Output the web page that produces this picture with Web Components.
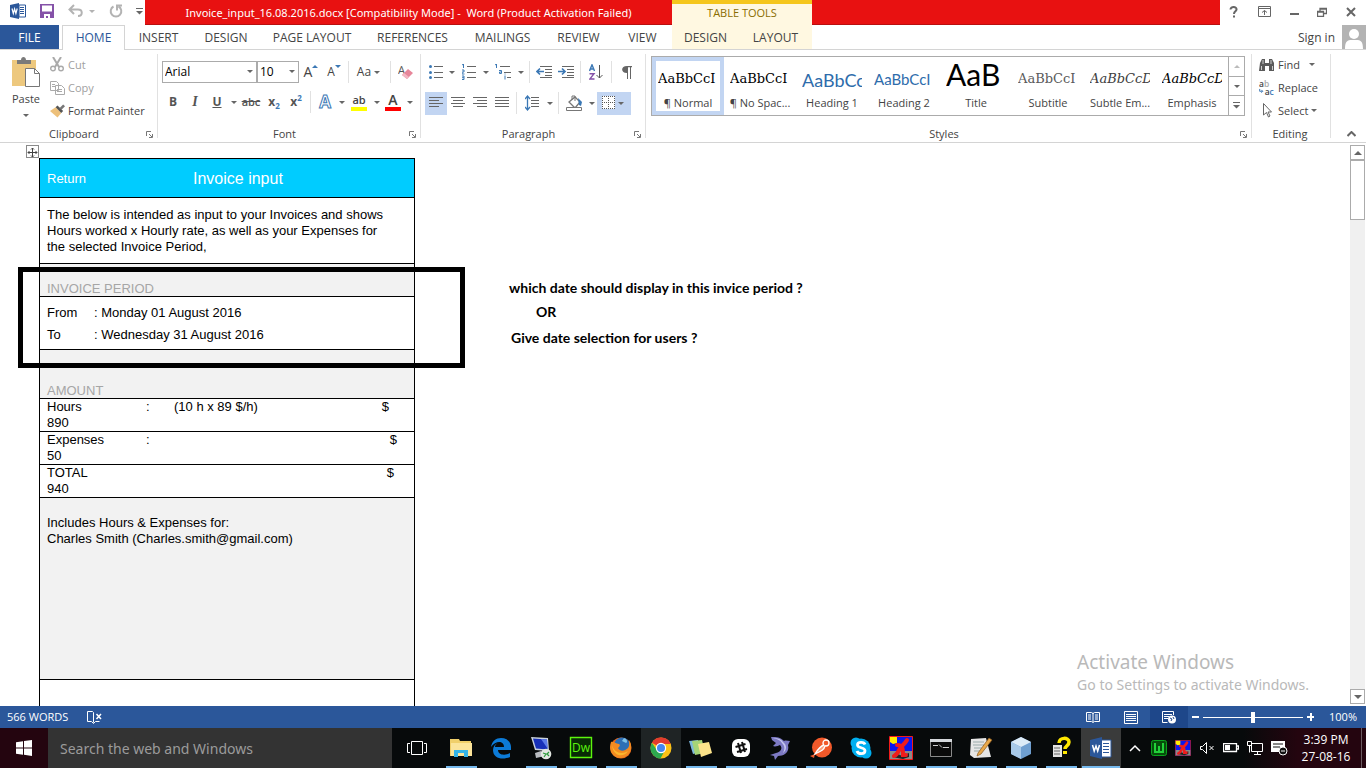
<!DOCTYPE html>
<html lang="en">
<head>
<meta charset="utf-8">
<title>Invoice_input_16.08.2016.docx - Word</title>
<style>
  html, body { margin: 0; height: 100%; }
  body { font: 11px/16px "Open Sans", "Noto Sans", sans-serif; color: #444; background: #fff; overflow: hidden; }
</style>
</head>
<body>
<word-desktop></word-desktop>

<script>
const G = '#666', B = '#3b78b5';
const lines = (x, ys, w, c = G) => ys.map((y, i) => `<path d="M${Array.isArray(x) ? x[i] : x} ${y}.5h${Array.isArray(w) ? w[i] : w}" stroke="${c}" fill="none"/>`).join('');

/* name: [width, height, markup] */
const ICONS = {
  word: [16, 16, `<path d="M9 2h6.500v12H9z" fill="#fff" stroke="#2b579a"/><path d="M10 4.500h4M10 6.500h4M10 8.500h4M10 10.500h4" stroke="#2b579a"/><path d="M0 2l9-2v16l-9-2z" fill="#2b579a"/><path d="M2 5.500l1.300 5L4.600 6l1.300 4.500L7.200 5.500" stroke="#fff" stroke-width="1.200" fill="none"/>`],
  save: [14, 14, `<path d="M0 0h14v14H0z" fill="#8552a8"/><path d="M2 1.500h10v6H2zM4 10h6v4H8v-2H6v2H4z" fill="#fff"/>`],
  undo: [16, 14, `<path d="M1.500 5.500h8.500c5 0 5 6.500 0 6.500M6 1L1.500 5.500 6 10" stroke="#b3b3b3" stroke-width="2" fill="none"/>`],
  redo: [14, 14, `<path d="M4.500 2.500A5.300 5.300 0 1 0 9.500 2.500M8 6.500V1.500h5" stroke="#b3b3b3" stroke-width="2" fill="none"/>`],
  more: [7, 7, `<path d="M0 .5h7" stroke="#666"/><path d="M0 3h7l-3.500 3.500z" fill="#666"/>`],
  help: [10, 12, `<path d="M1.500 3.500c0-3.500 6.500-3 6 0C7.200 5.500 5 5 5 8" stroke="#666" stroke-width="2" fill="none"/><path d="M4 9.500h2v2H4z" fill="#666"/>`],
  ribbonopt: [13, 11, `<path d="M.5.5h12v10H.5zM.5 2.500h12M6.500 9V4.500M4 6.500l2.500-2 2.500 2" stroke="#666" fill="none"/>`],
  min: [9, 10, `<path d="M0 6h9v2H0z" fill="#666"/>`],
  restore: [10, 10, `<path d="M.5 4.500h6v5h-6zM.5 5h6M3 4V1.500h6.500v5H7M3 2h6.500" stroke="#666" stroke-width="1.300" fill="none"/>`],
  close: [10, 10, `<path d="M1 1l8 8M9 1L1 9" stroke="#666" stroke-width="2"/>`],
  user: [24, 24, `<path d="M0 0h24v24H0z" fill="#b3b3b3"/><circle cx="12" cy="9" r="5" fill="#fff"/><path d="M3 24c0-10 4-9 9-9s9-1 9 9z" fill="#fff"/>`],
  paste: [30, 31, `<path d="M1 3h24v26H1z" fill="#edc87e"/><path d="M6 7V3h4c0-4 5-4 5 0h5v4z" fill="#7a7a7a"/><path d="M14.500 11.500h9l5 5v13h-14z" fill="#fff" stroke="#777"/><path d="M23.500 11.500v5h5" fill="none" stroke="#777"/>`],
  cut: [14, 15, `<path d="M3 0l6 10M11 0L5 10" stroke="#aaa" stroke-width="2"/><circle cx="3" cy="11.500" r="2.300" fill="none" stroke="#aaa" stroke-width="1.400"/><circle cx="11" cy="11.500" r="2.300" fill="none" stroke="#aaa" stroke-width="1.400"/>`],
  copy: [15, 14, `<path d="M.5.5h6l2 2v7h-8zM5.500 4.500h6l3 3v6h-9z" fill="#fff" stroke="#aaa"/><path d="M2 3.500h3M2 5.500h3M7 8.500h5M7 10.500h5" stroke="#aaa"/>`],
  painter: [16, 14, `<path d="M0 7l6-4 6 6-4 5z" fill="#edc07a"/><path d="M6 3l2-2 6 6-2 2z" fill="#555"/><path d="M10 4l4-4 2 2-4 4z" fill="#777"/>`],
  launch: [7, 7, `<path d="M.5 5V.5H5M3 3l3 3M6.500 3v3.500H3" stroke="#777" fill="none"/>`],
  eraser: [16, 15, `<text x="0" y="9" font-size="11" fill="#555" font-family="Open Sans">A</text><path d="M4 10l6-6 5 4-6 6z" fill="#e7869a"/><path d="M4 10l2-2 5 4-2 2z" fill="#f3b6c2"/>`],
  bullets: [14, 14, `<circle cx="1.500" cy="1.500" r="1.500" fill="${B}"/><circle cx="1.500" cy="7.500" r="1.500" fill="${B}"/><circle cx="1.500" cy="12.500" r="1.500" fill="${B}"/>` + lines(5, [1, 7, 12], 9)],
  numbers: [14, 16, `<path d="M0 1l1.500-1v4M0 6h2v2H0v2h2.500M0 12h2v3.500H0M0 13.700h2" stroke="${B}" fill="none"/>` + lines(5, [2, 8, 13], 9)],
  multi: [16, 16, `<path d="M0 1l1.500-1v4M4 6.500h2.500v3H4.500v-1.500h2M10 11.500v4M10 9.500v1" stroke="${B}" fill="none"/>` + lines([5, 9, 12], [2, 8, 13], [10, 7, 4])],
  outdent: [16, 12, lines([4, 9, 9, 9, 4], [0, 3, 6, 9, 11], [12, 7, 7, 7, 12]) + `<path d="M8 5.500H1.500M4 2.500l-3 3 3 3" stroke="${B}" stroke-width="1.700" fill="none"/>`],
  indent: [16, 12, lines([4, 9, 9, 9, 4], [0, 3, 6, 9, 11], [12, 7, 7, 7, 12]) + `<path d="M0 5.500h6.500M4 2.500l3 3-3 3" stroke="${B}" stroke-width="1.700" fill="none"/>`],
  sort: [14, 16, `<path d="M.5 7L3 .8 5.500 7M1.500 5h3" stroke="${B}" stroke-width="1.400" fill="none"/><path d="M.5 9.700h4.500L.8 15h4.700" stroke="#8552a8" stroke-width="1.400" fill="none"/><path d="M10.500 1v13M7.500 11l3 3 3-3" stroke="#555" fill="none"/>`],
  pilcrow: [10, 13, `<path d="M5 0h5v1.200H9V13H8V1.200H6V13H5V7C-1.500 7-1.500 0 5 0z" fill="#666"/>`],
  left: [14, 12, lines(0, [0, 3, 6, 9], [14, 10, 14, 10])],
  center: [14, 12, lines([0, 2, 0, 2], [0, 3, 6, 9], [14, 10, 14, 10])],
  right: [14, 12, lines([0, 4, 0, 4], [0, 3, 6, 9], [14, 10, 14, 10])],
  justify: [14, 12, lines(0, [0, 3, 6, 9], 14)],
  spacing: [14, 16, `<path d="M2.500 2v12M0 4l2.500-3L5 4M0 12l2.500 3L5 12" stroke="${B}" stroke-width="1.300" fill="none"/>` + lines(6, [2, 5, 8, 11], 8)],
  fill: [17, 16, `<path d="M3 7l6-5 5 5-5 6z" fill="#fff" stroke="#777" stroke-width="1.300"/><path d="M6 5V1h3v5" fill="none" stroke="#777"/><path d="M12 3l4 4-1 4-2-1z" fill="${B}"/><path d="M.5 12.500h15v3H.5z" fill="#fff" stroke="#777"/>`],
  borders: [14, 14, `<path d="M0 0h13v13H0z" fill="#fff"/><path d="M.5 0v13M12.500 0v13M6.500 0v13M0 .5h13M0 6.500h13M0 12.500h13" stroke="#555" stroke-dasharray="1 1" fill="none"/>`],
  find: [16, 14, `<path d="M1 5l2-4h3v4h4V1h3l2 4v8h-5V8H6v5H0z" fill="#5a5a5a"/><path d="M4 2v4M12 2v4M2.500 8v4M13.500 8v4" stroke="#fff" stroke-width=".7"/>`],
  replace: [17, 16, `<text x="0" y="7" font-size="9" font-weight="600" fill="#444" font-family="Open Sans">a<tspan fill="#aaa">b</tspan></text><text x="6" y="15" font-size="9" font-weight="600" fill="#444" font-family="Open Sans">a<tspan fill="${B}">c</tspan></text><path d="M.7 9v2.500h3M2.500 10l1.500 1.500L2.500 13" stroke="${B}" fill="none"/>`],
  select: [9, 15, `<path d="M.5.5v11.500l3-2.500 2 4.500 1.500-1-2-4h3.500z" fill="#fff" stroke="#666"/>`],
  collapse: [9, 6, `<path d="M.5 5l4-4 4 4" stroke="#666" stroke-width="2" fill="none"/>`],
  move: [11, 11, `<path d="M5.500 1v9M1 5.500h9M4 2.500L5.500 1 7 2.500M4 8.500L5.500 10 7 8.500M2.500 4L1 5.500 2.500 7M8.500 4L10 5.500 8.500 7" stroke="#444" fill="none"/>`],
  proof: [15, 13, `<path d="M6.500 1.500L5.500.5h-5v10h4l2 2 2-2h4" fill="none" stroke="#fff"/><path d="M6.500 1.500v10" stroke="#fff"/><path d="M9.500 3l4.500 5M14 3L9.500 8" stroke="#fff" stroke-width="1.500"/>`],
  read: [14, 12, `<path d="M.5 1.500h5l1.500 1 1.500-1h5v9h-5L7 11.500l-1.500-1h-5zM7 2v9M2 4h3M2 6h3M2 8h3M9 4h3M9 6h3M9 8h3" stroke="#fff" fill="none"/>`],
  print: [14, 13, `<path d="M.5.500h13v12H.5zM2 3.500h10M2 5.500h10M2 7.500h10M2 9.500h10" stroke="#fff" fill="none"/>`],
  web: [15, 13, `<path d="M11.500 4V.5H.5v11h5M2 3.500h8M2 5.500h5M2 7.500h4" stroke="#fff" fill="none"/><circle cx="10" cy="8.500" r="4" fill="#fff"/><path d="M8 7l2 1-1 2M11 6l1 2" stroke="#1e478a" fill="none"/>`],
  start: [16, 16, `<path d="M0 2.200L7 1.200V7.500H0zM8 1l8-1v7.500H8zM0 8.500h7v6.300l-7-1zM8 8.500h8V16l-8-1.200z" fill="#fff"/>`],
  taskview: [20, 14, `<path d="M4.500.5h11v13h-11zM3 2.500H.5v9H3M17 2.500h2.500v9H17" stroke="#fff" fill="none"/>`],
  explorer: [24, 24, `<path d="M1 3h9l1 2h11v15H1z" fill="#f0cf6a"/><path d="M2 7h21v13H2z" fill="#fbe49a"/><path d="M5 21v-7h14v7h-4v-4H9v4z" fill="#35b4e8"/>`],
  edge: [24, 24, `<path d="M2 11C3 5 7 2 12 2c6 0 10 4 10 9v3H9c0 5 7 6 12 3v4c-7 3-17 2-17-7 0-3 2-6 5-7-2 1-3 2-3 4h9c0-6-8-7-13 0z" fill="#0c7bd8"/>`],
  remote: [24, 24, `<path d="M2 1l17 1 1 13-14-1z" fill="#c9d2dc"/><path d="M4 2.500l14 1 .5 10L7 12.500z" fill="#1730b8"/><path d="M12 3l6 .5.500 9z" fill="#5a7ae8"/><path d="M6 17l6-2 4 5-9 2z" fill="#b9bdc2"/><circle cx="17" cy="18" r="5.300" fill="#e1e6e1"/><path d="M14 17l3 1-2 3M20 16l-2 2 2 2" stroke="#2b9a3a" stroke-width="1.200" fill="none"/>`],
  dreamweaver: [24, 24, `<path d="M1.500 1.500h21v20h-21z" fill="#082a05" stroke="#5cf40e" stroke-width="1.400"/><text x="3" y="16" font-size="12" fill="#5cf40e" font-family="Open Sans">Dw</text>`],
  firefox: [24, 24, `<circle cx="12" cy="12" r="10.500" fill="#e8681a"/><circle cx="13" cy="9.500" r="8" fill="#2d6fb5"/><path d="M15 2c3 1 4 4 2 5l-4-2z" fill="#7ec2e8"/><path d="M2 6c3-1 4 2 8 2 2 1 0 3-1 4 2 4 7 3 10 0 2-3 1-6 1-8 4 5 3 16-8 18C3 22-1 14 2 6z" fill="#f38a20"/><path d="M3 9c2 8 10 10 16 6-4 7-15 6-16-6z" fill="#fbb62d"/>`],
  chrome: [24, 24, `<circle cx="12" cy="12" r="10.500" fill="#fbc116"/><path d="M12 12L2.900 6.700A10.500 10.500 0 0 1 21.700 8H12z" fill="#e33b2e"/><path d="M2.900 6.700A10.500 10.500 0 0 0 11.500 22.500L16 14l-8 .3z" fill="#2da94f"/><circle cx="12" cy="12" r="5.200" fill="#fff"/><circle cx="12" cy="12" r="4" fill="#4587f0"/>`],
  notes: [26, 24, `<path d="M1 5l9-1 2 12-7 2z" fill="#7db8dd"/><path d="M4 5l10-1 3 13-10 2z" fill="#a5d477"/><path d="M10 8l11-2 3 11-11 4z" fill="#fbe38a"/>`],
  slack: [24, 24, `<rect x="3" y="3" width="18" height="18" rx="6" fill="#fff"/><path d="M9 7l3 10M13 6l3 10M6.500 11l10-3M8 16l10-3" stroke="#111" stroke-width="2"/>`],
  dolphin: [24, 24, `<path d="M2 1c6 0 9 0 13 4 2-1 4 0 6 0l-2 4c2 8-5 11-10 11l-3 4-1-4-4-1 6-2c5-1 7-5 4-8-2 1-5 2-7 1l3-3-4-3z" fill="#7d7ac4"/><path d="M4 2c5 0 8 1 10 4 4 3 4 8 0 11 2-4 2-7-1-10-2-3-5-4-9-5z" fill="#c5c7ee"/>`],
  postman: [24, 24, `<circle cx="13" cy="11.500" r="10" fill="#f1592a"/><path d="M1 20l5-2-1 4z" fill="#f1592a"/><circle cx="17" cy="7" r="3" fill="none" stroke="#fff" stroke-width="1.300"/><path d="M15 9c-4 1-6 4-9 9 6-3 9-4 10-8" stroke="#fff" stroke-width="1.300" fill="#f7a07f"/>`],
  skype: [24, 24, `<circle cx="12" cy="12" r="9.500" fill="#00aff0"/><circle cx="7" cy="7" r="5.500" fill="#00aff0"/><circle cx="17" cy="17" r="5.500" fill="#00aff0"/><path d="M16 8.500C15 5.500 8.500 5.500 8.500 9s7.500 2 7.500 5.800S9 18.500 8 15" stroke="#fff" stroke-width="2.800" fill="none"/>`],
  xming: [24, 24, `<path d="M.5.5h23v23H.5z" fill="#0a17ee" stroke="#f01b1b"/><path d="M1 15h22v8H1z" fill="#8a8a8a"/><path d="M3 21l6-3 4 2 7-3v4l-6 2z" fill="#222"/><path d="M1 1h7v6l-4 1-3-2z" fill="#ffee00"/><path d="M18 4c-2 4-6 6-8 10-1 3-3 5-5 6M8 9c6 0 6 4 6 10h3" stroke="#f01b1b" stroke-width="4" fill="none" stroke-linecap="round"/>`],
  cmd: [24, 24, `<path d="M1.500 3.500h21v17h-21z" fill="#0a0a0a" stroke="#8a8a8a"/><path d="M1 3h22v3H1z" fill="#d5d8dc"/><path d="M4 9.500h5M10 8.500l3 3M14 11.500h6" stroke="#ccc"/>`],
  notepad: [24, 24, `<path d="M2 3l15-1 5 19-17 1-4-3z" fill="#e6e6e6"/><path d="M4 6h11M4 9h11M5 12h8M5 15h7" stroke="#9aa"/><path d="M9 17L20 2l3 2-11 14-4 2z" fill="#e9a94b" stroke="#8b5a1e" stroke-width=".7"/>`],
  cube: [24, 24, `<path d="M12 1l10 5v12l-10 5-10-5V6z" fill="#6f9fd0"/><path d="M12 1l10 5-10 5L2 6z" fill="#dcebf7"/><path d="M2 6l10 5v12L2 18z" fill="#a8c9e8"/>`],
  hlp: [24, 24, `<path d="M4 9h9v12H4z" fill="#e4e4e4"/><path d="M5 12h6M5 15h6M5 18h6" stroke="#666"/><path d="M10 7c0-6 10-6 10-1 0 4-4 3.500-4 7" stroke="#ffe800" stroke-width="3.500" fill="none"/><path d="M14 15h4v3h-4z" fill="#ffe800"/>`],
  wordbig: [24, 24, `<path d="M12 4h10v17H12z" fill="#fff" stroke="#2b579a"/><path d="M14 7.500h6M14 10.500h6M14 13.500h6M14 16.500h6" stroke="#2b579a"/><path d="M1 4l12-3v22L1 20z" fill="#2b579a"/><path d="M3.500 9l1.700 6L7 10l1.700 5 1.800-6" stroke="#fff" stroke-width="1.500" fill="none"/>`],
  chevup: [12, 8, `<path d="M1 7l5-5 5 5" stroke="#fff" stroke-width="1.500" fill="none"/>`],
  wtray: [16, 16, `<rect x=".5" y=".5" width="15" height="15" rx="2" fill="#064d0b" stroke="#0aa51c"/><path d="M4 3v9h8V3M8 6v6" stroke="#22d13a" stroke-width="2" fill="none"/>`],
  mute: [15, 12, `<path d="M.5 4.500h2L6.500.500v11l-4-4h-2zM9.500 4l4 4M13.500 4l-4 4" stroke="#fff" fill="none"/>`],
  battery: [16, 10, `<path d="M.5.500h13v8H.5zM14 3h1.500v3H14" stroke="#fff" stroke-width="1.300" fill="none"/><path d="M2 2h5v5H2z" fill="#fff"/>`],
  network: [17, 15, `<path d="M4.500 2.500h11v8h-11zM7 13.500h7M10.500 11v2M.5.500h4v4h-4zM2.500 4.500v7" stroke="#fff" fill="none"/>`],
  action: [17, 16, `<path d="M0 1h14v11H0z" fill="#fff"/><path d="M2 4h10M2 7h7" stroke="#111"/><circle cx="12" cy="11" r="4" fill="#111" stroke="#fff"/><path d="M10 11h4" stroke="#fff"/>`],
};
ICONS.xtray = [16, 16, `<g transform="scale(.667)">${ICONS.xming[2]}</g>`];

class Part extends HTMLElement {
  connectedCallback() {
    if (this.shadowRoot) return;
    const t = document.createElement('template');
    t.innerHTML = `<style>
      *{box-sizing:border-box}
      button{font:inherit;color:inherit;background:none;border:0;padding:0;margin:0;display:flex;align-items:center;justify-content:center}
      a{color:inherit;text-decoration:none}
      ${this.css()}</style>${this.html()}`;
    this.attachShadow({ mode: 'open' }).append(t.content.cloneNode(true));
  }
  css() { return ''; }
  html() { return '<slot></slot>'; }
}
const define = (name, css, html) => customElements.define(name, class extends Part {
  css() { return css; }
  html() { return typeof html === 'function' ? html(this) : html; }
});

define('ui-icon', ':host{display:inline-flex;flex:none} svg{display:block}', el => {
  const [w, h, body] = ICONS[el.getAttribute('name')];
  return `<svg width="${w}" height="${h}" viewBox="0 0 ${w} ${h}" aria-hidden="true">${body}</svg>`;
});
const icon = n => `<ui-icon name="${n}"></ui-icon>`;

define('drop-arrow', ':host{display:inline-flex;flex:none;width:11px;justify-content:center} i{border:3px solid transparent;border-top-color:#666;border-bottom:0}', '<i></i>');

/* Square toolbar button; the w attribute is its width */
define('tool-button', `
  :host{display:flex;height:23px;flex:none}
  button{width:100%;height:100%}
  :host([on]) button{background:#c2d5f2}`,
  el => `<style>:host{width:${el.getAttribute('w') || 22}px}</style><button aria-label="${el.getAttribute('label')}"><slot></slot></button>`);
define('tool-sep', ':host{display:flex;justify-content:center;flex:none;width:7px;height:22px} i{width:1px;background:#e1e1e1}', '<i></i>');

define('combo-box', `
  :host{display:block;position:relative;height:22px;flex:none}
  select{appearance:none;width:100%;height:100%;border:1px solid #ababab;border-radius:0;background:#fff;font:12px/20px "Open Sans",sans-serif;color:#000;padding:0 2px;outline:0}
  drop-arrow{position:absolute;right:2px;top:9px;pointer-events:none}`,
  el => `<style>:host{width:${el.getAttribute('w')}px}</style><select aria-label="${el.getAttribute('label')}"><option>${el.getAttribute('value')}</option></select><drop-arrow></drop-arrow>`);

define('title-bar', `
  :host{display:flex;height:25px;flex:none}
  .qat{width:145px;display:flex;align-items:center;padding:0 2px 3px 10px;flex:none}
  .qat button{margin-right:14px;height:16px;flex:none}
  .qat button.s{margin-right:0}
  .qat button.g{margin-right:13px}
  .qat drop-arrow{margin:0 12px 0 2px;opacity:.5}
  .red{flex:1;display:flex;background:#e81111;border-bottom:1px solid #b90f0f;min-width:0}
  h1{margin:0;width:527px;text-align:center;color:#fff;font:11px/25px "Noto Sans",sans-serif;white-space:pre}
  .tt{width:140px;height:25px;border-top:4px solid #f5c61c;background:#fff8e1;color:#8a6d00;text-align:center;line-height:18px}
  .win{width:146px;display:flex;align-items:center;justify-content:space-between;padding:0 10px 2px 9px}`,
  `<div class="qat"><button aria-label="Word">${icon('word')}</button><button aria-label="Save">${icon('save')}</button><button class="s" aria-label="Undo">${icon('undo')}</button><drop-arrow></drop-arrow><button class="g" aria-label="Repeat">${icon('redo')}</button><button class="s" aria-label="Customize toolbar">${icon('more')}</button></div>
   <div class="red"><h1>Invoice_input_16.08.2016.docx [Compatibility Mode] -  Word (Product Activation Failed)</h1><div class="tt">TABLE TOOLS</div></div>
   <div class="win">${['help', 'ribbonopt', 'min', 'restore', 'close'].map(n => `<button aria-label="${n}">${icon(n)}</button>`).join('')}</div>`);

const tabs = [['HOME', 63, 'home'], ['INSERT', 67], ['DESIGN', 68], ['PAGE LAYOUT', 104], ['REFERENCES', 97], ['MAILINGS', 83], ['REVIEW', 69], ['VIEW', 59], ['DESIGN', 67, 't'], ['LAYOUT', 73, 't']];
define('tab-strip', `
  :host{display:flex;height:25px;flex:none;border-bottom:1px solid #d4d4d4;line-height:25px;font-size:12px}
  nav{display:flex;flex:1}
  a{text-align:center;height:24px;flex:none}
  .file{width:59px;background:#2b579a;color:#fff;margin-right:3px}
  .home{height:25px;border:1px solid #d4d4d4;border-bottom:0;background:#fff;color:#2b579a;line-height:24px}
  .t{background:#fff8e1}
  .sign{display:flex;gap:7px}`,
  `<nav><a class="file" href="#">FILE</a>${tabs.map(([n, w, c]) => `<a href="#" class="${c || ''}" style="width:${w}px">${n}</a>`).join('')}</nav>
   <a class="sign" href="#">Sign in ${icon('user')}</a>`);

/* A ribbon section: content on top, caption and launcher below */
define('ribbon-group', `
  :host{display:flex;flex-direction:column;flex:none;height:89px;background:linear-gradient(#e1e1e1,#e1e1e1) 100% 1px/1px 84px no-repeat}
  .body{flex:1;min-height:0}
  .cap{display:flex;align-items:center;height:16px;padding:0 5px 0 2px}
  .cap span{flex:1;text-align:center}
  button{height:7px}`,
  el => `<style>:host{width:${el.getAttribute('w')}px}</style><div class="body"><slot></slot></div>
   <div class="cap"><span>${el.getAttribute('caption')}</span>${el.hasAttribute('launcher') ? `<button aria-label="${el.getAttribute('caption')} settings">${icon('launch')}</button>` : ''}</div>`);

define('clipboard-tools', `
  :host{display:flex}
  .paste{width:46px;flex-direction:column;padding:4px 0 0 6px;justify-content:flex-start;gap:3px}
  .paste drop-arrow{margin-top:4px}
  ul{margin:0;padding:0 0 0 4px;list-style:none}
  li button{height:23px;gap:3px}
  li ui-icon{width:15px}
  .off{color:#a0a0a0}`,
  `<button class="paste">${icon('paste')}<span>Paste</span><drop-arrow></drop-arrow></button>
   <ul><li><button class="off">${icon('cut')}Cut</button></li><li><button class="off">${icon('copy')}Copy</button></li><li><button>${icon('painter')}Format Painter</button></li></ul>`);

define('font-tools', `
  :host{display:block;padding:8px 0 0 4px}
  .row{display:flex;align-items:center;height:22px}
  .row+.row{margin-top:8px}
  b,i,u,s{font:700 12px/20px "Open Sans",sans-serif;color:#555}
  i{font:italic 700 14px/20px "Liberation Serif",serif}
  s{font-size:11px;font-weight:600}
  sub,sup{font-size:8px;color:${B};line-height:0}
  .A{font-size:14px}
  .a{font-size:12px}
  .up,.dn{width:0;height:0;border:3px solid transparent;align-self:flex-start;margin-top:4px}
  .up{border-bottom-color:${B};border-top:0}
  .dn{border-top-color:${B};border-bottom:0}
  .out{color:#fff;font:700 17px/20px "Open Sans",sans-serif;-webkit-text-stroke:1px ${B}}
  .bar{display:flex;flex-direction:column;align-items:center;font:600 11px/12px "Open Sans",sans-serif;border-bottom:4px solid #ff0;width:16px;height:17px}
  .bar.r{border-color:#f00;font-size:14px}`,
  `<div class="row"><combo-box w="95" label="Font" value="Arial"></combo-box><combo-box w="42" label="Font size" value="10"></combo-box>
    <tool-button w="24" label="Grow font"><span class="A">A</span><span class="up"></span></tool-button><tool-button w="22" label="Shrink font"><span class="a">A</span><span class="dn"></span></tool-button><tool-sep></tool-sep>
    <tool-button w="35" label="Change case"><span class="a">Aa</span><drop-arrow></drop-arrow></tool-button><tool-sep></tool-sep><tool-button w="24" label="Clear formatting">${icon('eraser')}</tool-button></div>
   <div class="row"><tool-button label="Bold"><b>B</b></tool-button><tool-button label="Italic"><i>I</i></tool-button><tool-button label="Underline"><u>U</u></tool-button><drop-arrow></drop-arrow>
    <tool-button w="24" label="Strikethrough"><s>abc</s></tool-button><tool-button label="Subscript"><b>x<sub>2</sub></b></tool-button><tool-button label="Superscript"><b>x<sup>2</sup></b></tool-button><tool-sep></tool-sep>
    <tool-button label="Text effects"><span class="out">A</span></tool-button><drop-arrow></drop-arrow><tool-button w="24" label="Highlight"><span class="bar">ab</span></tool-button><drop-arrow></drop-arrow>
    <tool-button label="Font colour"><span class="bar r">A</span></tool-button><drop-arrow></drop-arrow></div>`);

const tb = (n, w, on) => `<tool-button label="${n}" w="${w}"${on ? ' on' : ''}>${icon(n)}</tool-button>`;
define('paragraph-tools', `
  :host{display:block;padding:8px 0 0 4px}
  .row{display:flex;align-items:center;height:22px}
  .row+.row{margin-top:9px}`,
  `<div class="row">${tb('bullets', 21)}<drop-arrow></drop-arrow>${tb('numbers', 23)}<drop-arrow></drop-arrow>${tb('multi', 24)}<drop-arrow></drop-arrow><tool-sep></tool-sep>${tb('outdent', 22)}${tb('indent', 22)}<tool-sep></tool-sep>${tb('sort', 24)}<tool-sep></tool-sep>${tb('pilcrow', 24)}</div>
   <div class="row">${tb('left', 22, 1)}${tb('center', 22)}${tb('right', 22)}${tb('justify', 22)}<tool-sep></tool-sep>${tb('spacing', 24)}<drop-arrow></drop-arrow><tool-sep></tool-sep>${tb('fill', 24)}<drop-arrow></drop-arrow><tool-button w="34" label="Borders" on>${icon('borders')}<drop-arrow></drop-arrow></tool-button></div>`);

const styles = [['¶ Normal', 'sel'], ['¶ No Spac...', ''], ['Heading 1', 'h1'], ['Heading 2', 'h2'], ['Title', 'ti', 'AaB'], ['Subtitle', 'su'], ['Subtle Em...', 'se', 'AaBbCcD'], ['Emphasis', 'em', 'AaBbCcD']];
define('style-gallery', `
  :host{display:flex;height:60px;margin:3px 7px 0 5px;border:1px solid #ababab}
  .it{flex-direction:column;width:72px;height:58px;justify-content:flex-start;padding-top:7px;border:0}
  .sel{border:4px solid #c2d5f2;padding-top:3px}
  .p{width:60px;height:31px;overflow:hidden;white-space:nowrap;font:13px/30px "DejaVu Serif",serif;color:#000;text-align:left}
  .l{line-height:16px;white-space:nowrap}
  .h1 .p{font:18px/32px Lato,sans-serif;color:#2e6cab}
  .h2 .p{font:15px/31px Lato,sans-serif;color:#2e6cab}
  .ti .p{font:30px/20px Lato,sans-serif}
  .su .p{color:#5a5a5a}
  .se .p{color:#404040;font-style:italic}
  .em .p{font-style:italic}
  .nav{display:flex;flex-direction:column;flex:1}
  .nav button{flex:1;border-left:1px solid #ababab;border-bottom:1px solid #ababab}
  .nav button:last-child{border-bottom:0}
  .u{border:3px solid transparent;border-bottom-color:#bbb;border-top:0}`,
  `${styles.map(([l, c, p]) => `<button class="it ${c}"><span class="p">${p || 'AaBbCcI'}</span><span class="l">${l}</span></button>`).join('')}
   <div class="nav"><button aria-label="Up"><i class="u"></i></button><button aria-label="Down"><drop-arrow></drop-arrow></button><button aria-label="More">${icon('more')}</button></div>`);

define('editing-tools', `
  :host{display:block;padding-left:7px}
  button{height:23px;gap:3px}
  ui-icon{width:16px;justify-content:center}
  .f drop-arrow{margin-left:4px}
  .s{gap:0} .s ui-icon{margin-right:3px}`,
  `<button class="f">${icon('find')}Find<drop-arrow></drop-arrow></button><button>${icon('replace')}Replace</button><button class="s">${icon('select')}Select<drop-arrow></drop-arrow></button>`);

define('ribbon-bar', `
  :host{display:flex;height:93px;flex:none;padding-top:3px;border-bottom:1px solid #d4d4d4}
  .grow{flex:1;display:flex;justify-content:flex-end;align-items:flex-end;padding:0 10px 5px 0}`,
  `<ribbon-group w="158" caption="Clipboard" launcher><clipboard-tools></clipboard-tools></ribbon-group>
   <ribbon-group w="263" caption="Font" launcher><font-tools></font-tools></ribbon-group>
   <ribbon-group w="225" caption="Paragraph" launcher><paragraph-tools></paragraph-tools></ribbon-group>
   <ribbon-group w="606" caption="Styles" launcher><style-gallery></style-gallery></ribbon-group>
   <ribbon-group w="79" caption="Editing"><editing-tools></editing-tools></ribbon-group>
   <div class="grow"><button aria-label="Collapse ribbon">${icon('collapse')}</button></div>`);

define('invoice-table', `
  :host{display:block;width:376px;flex:none;font:13px/16px "Liberation Sans",Arial,sans-serif;color:#000}
  table{width:100%;border:1px solid #000;border-spacing:0;table-layout:fixed}
  td,th{padding:0 7px;border-bottom:1px solid #000;vertical-align:middle;font-weight:400;text-align:left}
  .head th{height:39px;background:#0cf;color:#fff;padding-top:2px}
  .hd{display:flex;align-items:center}
  .hd a{width:146px}
  .hd span{font-size:16px}
  .intro td{height:66px}
  .sec th{background:#f2f2f2;color:#a6a6a6;vertical-align:bottom;line-height:14px}
  .s1 th{height:33px} .s2 th{height:49px}
  .dates td{height:53px;line-height:22px;padding-top:2px}
  .dates div{display:grid;grid-template-columns:47px auto}
  .line td{height:33px;vertical-align:bottom}
  .line td{line-height:16px}
  .line div{display:grid;grid-template-columns:99px 28px 1fr auto}
  .c1{padding-right:18px}.c2{padding-right:10px}.c3{padding-right:13px}
  .notes td{height:182px;background:#f2f2f2;vertical-align:top;padding-top:17px}
  .rest td{height:80px}`,
  `<table>
    <tr class="head"><th><div class="hd"><a href="#">Return</a><span>Invoice input</span></div></th></tr>
    <tr class="intro"><td>The below is intended as input to your Invoices and shows<br>Hours worked x Hourly rate, as well as your Expenses for<br>the selected Invoice Period,</td></tr>
    <tr class="sec s1"><th>INVOICE PERIOD</th></tr>
    <tr class="dates"><td><div><span>From</span><span>: Monday 01 August 2016</span><span>To</span><span>: Wednesday 31 August 2016</span></div></td></tr>
    <tr class="sec s2"><th>AMOUNT</th></tr>
    <tr class="line"><td><div><span>Hours</span><span>:</span><span>(10 h x 89 $/h)</span><span class="c1">$</span></div>890</td></tr>
    <tr class="line"><td><div><span>Expenses</span><span>:</span><span></span><span class="c2">$</span></div>50</td></tr>
    <tr class="line"><td><div><span>TOTAL</span><span></span><span></span><span class="c3">$</span></div>940</td></tr>
    <tr class="notes"><td>Includes Hours &amp; Expenses for:<br>Charles Smith (Charles.smith@gmail.com)</td></tr>
    <tr class="rest"><td></td></tr>
   </table>`);

define('scroll-bar', `
  :host{display:flex;flex-direction:column;width:15px;flex:none;margin:2px 1px 2px 0;background:#f0f0f0}
  button{height:15px;border:1px solid #ababab;background:#fff;flex:none}
  .thumb{height:60px;border:1px solid #ababab;background:#fff;flex:none}
  .fill{flex:1}
  .u{border:4px solid transparent;border-bottom-color:#666;border-top:0}
  .d{border:4px solid transparent;border-top-color:#666;border-bottom:0}`,
  `<button aria-label="Scroll up"><i class="u"></i></button><div class="thumb"></div><div class="fill"></div><button aria-label="Scroll down"><i class="d"></i></button>`);

define('document-canvas', `
  :host{display:flex;flex:1;min-height:0;overflow:hidden;position:relative;background:#fff}
  .page{flex:1;display:flex;padding:15px 0 0 39px;min-width:0}
  .handle{position:absolute;left:26px;top:2px;width:13px;height:13px;border:1px solid #8a8a8a;display:block}
  .mark{position:absolute;left:18px;top:124px;width:447px;height:101px;border:5px solid #000}
  .ask{margin:118px 0 0 94px;font:700 14px/24px Lato,Calibri,sans-serif;color:#000}
  .ask p{margin:0}
  .ask .or{padding-left:27px}
  .ask .last{padding:2px 0 0 2px}
  .wm{position:absolute;right:57px;bottom:11px;color:#b9b9b9;font:14px/20px "Noto Sans",sans-serif}
  .wm strong{display:block;font-size:19px;font-weight:400;line-height:26px}`,
  `<div class="page"><invoice-table></invoice-table>
    <div class="ask"><p>which date should display in this invice period ?</p><p class="or">OR</p><p class="last">Give date selection for users ?</p></div></div>
   <scroll-bar></scroll-bar>
   <button class="handle" aria-label="Move table">${icon('move')}</button><div class="mark"></div>
   <div class="wm"><strong>Activate Windows</strong>Go to Settings to activate Windows.</div>`);

define('status-bar', `
  :host{display:flex;align-items:center;height:22px;flex:none;background:#2b579a;color:#fff;padding:0 9px 0 7px}
  .w{margin-right:19px}
  .sp{flex:1}
  .v{width:38px;height:22px}
  .v.on{background:#1e478a}
  .z{width:15px;height:22px}
  .z i{width:7px;height:2px;background:#fff;display:block}
  .z .p{height:8px;background:linear-gradient(#fff,#fff) 0 3px/7px 2px no-repeat,linear-gradient(#fff,#fff) 3px 0/2px 8px no-repeat;width:8px}
  input{appearance:none;width:100px;height:12px;margin:0;background:linear-gradient(#fff,#fff) 0 50%/100% 1px no-repeat}
  input::-webkit-slider-thumb{appearance:none;width:4px;height:11px;background:#fff}
  output{width:39px;text-align:right}`,
  `<span class="w">566 WORDS</span>${icon('proof')}<span class="sp"></span>
   <button class="v" aria-label="Read mode">${icon('read')}</button><button class="v" aria-label="Print layout">${icon('print')}</button><button class="v on" aria-label="Web layout">${icon('web')}</button>
   <button class="z" aria-label="Zoom out"><i></i></button><input type="range" aria-label="Zoom" min="0" max="100" value="50"><button class="z" aria-label="Zoom in"><i class="p"></i></button><output>100%</output>`);

const apps = ['explorer', '-edge', 'remote', 'dreamweaver', 'firefox', '*chrome', 'notes', 'slack', 'dolphin', 'postman', 'skype', 'xming', 'cmd', 'notepad', 'cube', 'hlp', '*wordbig'];
define('task-bar', `
  :host{display:flex;height:40px;flex:none;background:linear-gradient(90deg,#070a0b 0,#070a0b 91%,#24050f 95%,#24050f 100%);color:#fff}
  .start{width:48px;background:#24050f}
  .q{width:344px;height:40px;border:0;border-radius:0;background:#333;padding:0 12px;font:14px/20px "Noto Sans",sans-serif;color:#fff;outline:0}
  .q::placeholder{color:#9b9b9b}
  .tv{width:49px}
  .app{width:40px;height:40px;position:relative}
  .run::after{content:"";position:absolute;left:5px;right:4px;bottom:0;height:2px;background:#76b9ed}
  .act{background:#1f2425}
  .act.wordbig{background:#3a3b3b}
  .act.wordbig::after{left:1px;right:1px}
  .act.chrome::after{display:none}
  .tray{display:flex;margin-left:auto;align-items:center}
  .tray button{width:24px;height:40px}
  time{width:70px;text-align:center;line-height:17px;font-size:12px}
  .tray .desk{width:5px;border-left:1px solid #6b5a60}`,
  `<button class="start" aria-label="Start">${icon('start')}</button><input class="q" type="search" placeholder="Search the web and Windows" aria-label="Search the web and Windows"><button class="tv" aria-label="Task view">${icon('taskview')}</button>
   ${apps.map(a => { const n = a.replace(/^[-*]/, ''); return `<button class="app ${n} ${a[0] === '-' ? '' : 'run'} ${a[0] === '*' ? 'act' : ''}" aria-label="${n}">${icon(n)}</button>`; }).join('')}
   <div class="tray">${['chevup', 'wtray', 'xtray', 'mute', 'battery', 'network', 'action'].map(n => `<button aria-label="${n}">${icon(n)}</button>`).join('')}<time datetime="2016-08-27T15:39">3:39 PM<br>27-08-16</time><button class="desk" aria-label="Show desktop"></button></div>`);

define('word-desktop', ':host{display:flex;flex-direction:column;height:100vh}',
  '<title-bar></title-bar><tab-strip></tab-strip><ribbon-bar></ribbon-bar><document-canvas></document-canvas><status-bar></status-bar><task-bar></task-bar>');
</script>
</body>
</html>
